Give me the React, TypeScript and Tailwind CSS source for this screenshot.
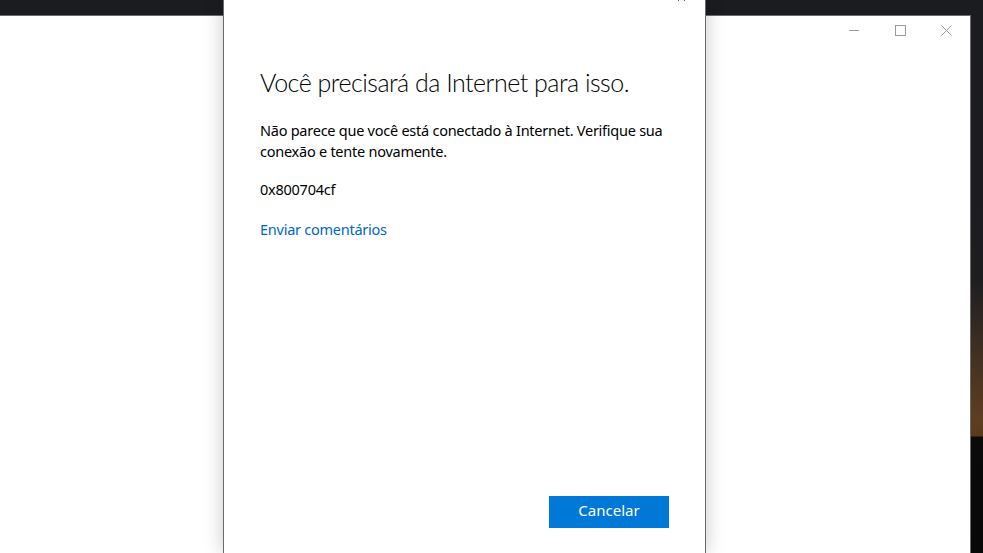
import { X } from "lucide-react";

const font = { fontFamily: '"Noto Sans", "Open Sans", sans-serif' };

function TitleControls() {
  return (
    <div className="flex h-[28px] items-center justify-end gap-[35px] pr-[18px] text-[#9a9a9a]">
      <svg width="11" height="11" viewBox="0 0 11 11" aria-hidden>
        <path d="M0 5.5h10" stroke="currentColor" strokeWidth="1" />
      </svg>
      <svg width="11" height="11" viewBox="0 0 11 11" aria-hidden>
        <rect x="0.5" y="0.5" width="10" height="10" fill="none" stroke="currentColor" strokeWidth="1" />
      </svg>
      <svg width="11" height="11" viewBox="0 0 11 11" aria-hidden>
        <path d="M0.5 0.5l10 10M10.5 0.5l-10 10" stroke="currentColor" strokeWidth="1" />
      </svg>
    </div>
  );
}

export default function App() {
  return (
    <div
      className="relative h-[553px] w-[983px] overflow-hidden bg-[linear-gradient(to_bottom,#1b1c20_0px,#1d1d20_280px,#3a2d22_340px,#5e3e20_420px,#5a3a1d_436px,#0a0a0a_437px,#080808_553px)]"
      style={font}
    >
      {/* app window behind the dialog */}
      <div className="absolute left-0 top-[15px] h-[538px] w-[971px] border-r border-t border-[#6b6b6b] bg-white">
        <TitleControls />
      </div>

      {/* modal dialog */}
      <div className="absolute left-[223px] top-0 flex h-[553px] w-[483px] flex-col border-x border-[#6a6a6a] bg-white shadow-[0_0_18px_rgba(0,0,0,0.22)]">
        <X
          className="absolute -top-[9px] left-[451px] text-[#222]"
          size={13}
          strokeWidth={1.4}
        />
        <div className="flex flex-1 flex-col pl-[36px] pr-[30px] pt-[64px] text-black">
          <h1
            className="whitespace-nowrap text-[25px] font-light leading-[36px] tracking-[-0.5px]"
            style={{ fontFamily: 'Lato, "Noto Sans", sans-serif' }}
          >
            Você precisará da Internet para isso.
          </h1>
          <p className="mt-[20px] text-[14.5px] leading-[21px] tracking-[-0.25px]">
            Não parece que você está conectado à Internet. Verifique sua
            conexão e tente novamente.
          </p>
          <p className="mt-[17px] text-[14.5px] leading-[21px] tracking-[-0.25px]">0x800704cf</p>
          <a className="mt-[19px] text-[14.5px] leading-[21px] tracking-[-0.25px] text-[#0067c0]">
            Enviar comentários
          </a>
        </div>
        <div className="flex justify-end pb-[25px] pr-[36px]">
          <button className="h-[32px] w-[120px] bg-[#0078d7] pb-[3px] text-[15px] text-white">
            Cancelar
          </button>
        </div>
      </div>
    </div>
  );
}
